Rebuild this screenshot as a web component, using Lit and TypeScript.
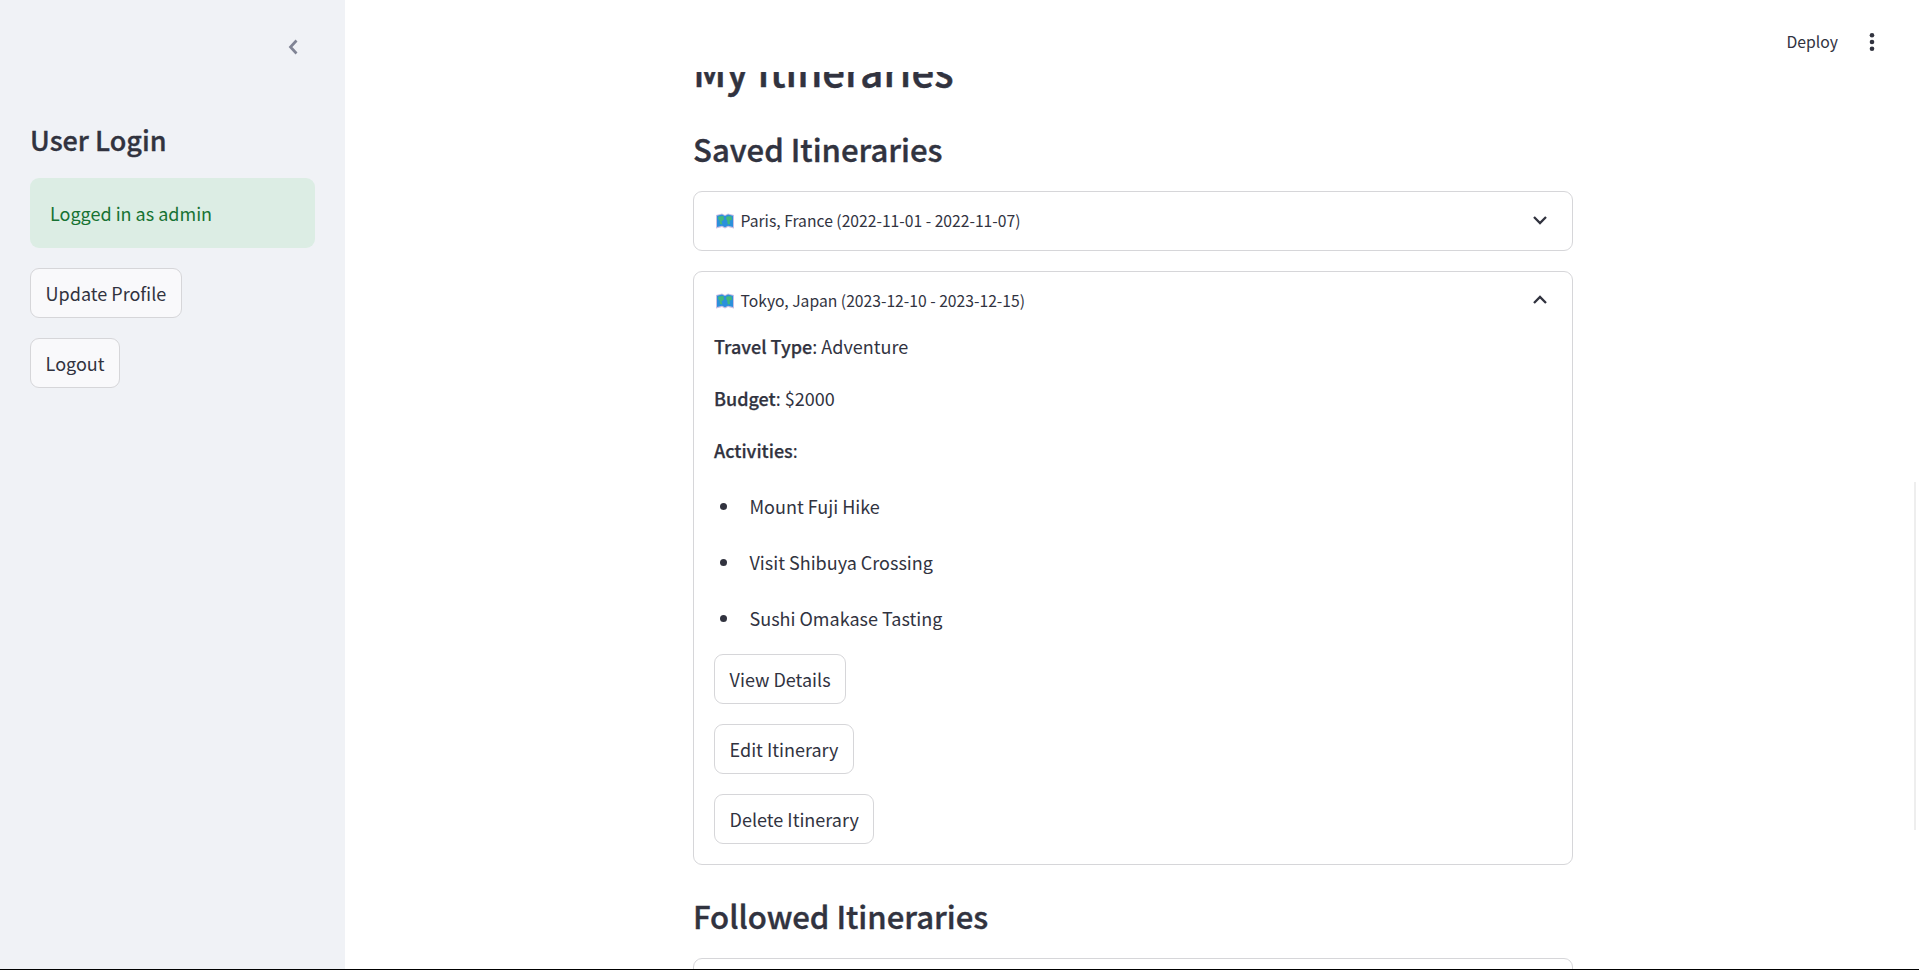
import { LitElement, html, css } from "lit";
import { customElement } from "lit/decorators.js";

const mapIcon = html`<svg class="map" viewBox="0 0 18 16" aria-hidden="true">
  <path d="M0 2 L6 0.5 L9 2 L12 0.5 L18 2 L18 15.5 L12 14 L9 15.5 L6 14 L0 15.5Z" fill="#c9bfe2"/>
  <path d="M1 2.8 L6 1.6 L9 3 L12 1.6 L17 2.8 L17 14 L12 12.8 L9 14.2 L6 12.8 L1 14Z" fill="#2b90dc"/>
  <path d="M2.5 3.5 L7.5 3 L8 6.5 L5.5 8.5 L6.5 11.5 L4 11 L3.6 7.5 L2 5.5Z" fill="#42b97c"/>
  <path d="M10.5 3.5 L15.5 3.2 L16 7 L13.5 7.5 L14.2 11 L11.8 11.5 L11.2 7.5 L10 5.5Z" fill="#42b97c"/>
</svg>`;

const chevronDown = html`<svg class="chev" viewBox="0 0 24 24" aria-hidden="true"><path d="M6 8 L12 14 L18 8" fill="none" stroke="currentColor" stroke-width="2.3"/></svg>`;
const chevronUp = html`<svg class="chev" viewBox="0 0 24 24" aria-hidden="true"><path d="M6 14 L12 8 L18 14" fill="none" stroke="currentColor" stroke-width="2.3"/></svg>`;

@customElement("app-root")
export class AppRoot extends LitElement {
  static styles = css`
    :host {
      display: block;
      height: 970px;
      overflow: hidden;
      font-family: "Noto Sans CJK SC", "Noto Sans", sans-serif;
      font-size: 18px;
      color: #31333f;
      background: #fff;
    }
    .frame { display: flex; flex-direction: column; height: 970px; }
    .app { flex: 1; min-height: 0; display: flex; position: relative; overflow: hidden; }
    .edge { flex: 0 0 1.5px; background: #000; }

    .sidebar {
      flex: 0 0 345px;
      box-sizing: border-box;
      background: #f0f2f6;
      padding: 0 30px;
      display: flex;
      flex-direction: column;
    }
    .collapse {
      height: 121px;
      display: flex;
      justify-content: flex-end;
      padding-top: 35px;
      box-sizing: border-box;
      color: #808495;
    }
    .collapse svg { width: 24px; height: 24px; margin-right: 10px; }
    .sb-title {
      margin: 0 0 19px;
      font-size: 27px;
      line-height: 38px;
      font-weight: 500;
      -webkit-text-stroke: 0.35px currentColor;
    }
    .alert {
      height: 70px;
      box-sizing: border-box;
      background: #dcede4;
      color: #177233;
      border-radius: 9px;
      padding: 0 20px;
      display: flex;
      align-items: center;
      margin-bottom: 20px;
    }

    .btn {
      display: flex;
      align-items: center;
      width: fit-content;
      height: 50px;
      box-sizing: border-box;
      padding: 0 14.6px;
      border: 1px solid #d6d6d9;
      border-radius: 9px;
      background: #fff;
      margin-bottom: 20px;
      line-height: 1;
      white-space: nowrap;
    }
    .sidebar .btn { background: #f9f9fb; }

    .main {
      flex: 1;
      min-width: 0;
      position: relative;
      overflow: hidden;
      display: flex;
      justify-content: center;
    }
    .header {
      position: absolute;
      inset: 0 0 auto 0;
      height: 72px;
      background: #fff;
      display: flex;
      align-items: center;
      justify-content: flex-end;
      padding: 11px 35px 0 0;
      gap: 22px;
      font-size: 15.75px;
      box-sizing: border-box;
    }
    .dots { width: 24px; height: 24px; color: #31333f; }
    .scrollbar {
      position: absolute;
      right: 3px;
      top: 482px;
      width: 2px;
      height: 348px;
      background: #eeeeee;
    }
    .content {
      width: 880px;
      margin-left: 2px;
      margin-top: 43px;
      display: flex;
      flex-direction: column;
      flex: none;
    }
    h1 {
      margin: 0 0 21px;
      font-size: 40.2px;
      line-height: 54px;
      font-weight: 500;
      -webkit-text-stroke: 0.45px currentColor;
    }
    h2 {
      margin: 6.5px 0 18.5px;
      font-size: 31.1px;
      line-height: 48px;
      font-weight: 500;
      -webkit-text-stroke: 0.4px currentColor;
    }
    .exp {
      border: 1px solid #d6d6d9;
      border-radius: 9px;
      margin-bottom: 20px;
      box-sizing: border-box;
    }
    .exp-head {
      height: 58px;
      display: flex;
      align-items: center;
      justify-content: space-between;
      padding: 0 20px 0 22px;
      font-size: 15.7px;
    }
    .exp-label { display: flex; align-items: center; gap: 6.5px; padding-bottom: 1px; }
    .map { width: 18px; height: 16px; display: block; }
    .chev { width: 24px; height: 24px; display: block; color: #31333f; }
    .exp-body { padding: 2px 20px 0; }
    .exp-body p { margin: 0 0 24px; line-height: 28px; }
    .exp-body b { font-weight: 500; -webkit-text-stroke: 0.25px currentColor; }
    ul { margin: 0; padding: 4px 0 0 6px; list-style: none; }
    li { line-height: 28px; margin-bottom: 28px; display: flex; align-items: center; gap: 22.5px; }
    li::before { content: ""; width: 7px; height: 7px; border-radius: 50%; background: #31333f; flex: none; }
    li:last-child { margin-bottom: 22px; }
    .placeholder { height: 58px; }
  `;

  render() {
    return html`<div class="frame">
      <div class="app">
        <aside class="sidebar">
          <div class="collapse">
            <svg viewBox="0 0 24 24" aria-hidden="true"><path d="M15.5 5.5 L9.5 12 L15.5 18.5" fill="none" stroke="currentColor" stroke-width="2.7"/></svg>
          </div>
          <h2 class="sb-title">User Login</h2>
          <div class="alert">Logged in as admin</div>
          <div class="btn">Update Profile</div>
          <div class="btn">Logout</div>
        </aside>
        <main class="main">
          <div class="content">
            <h1>My Itineraries</h1>
            <h2>Saved Itineraries</h2>
            <section class="exp">
              <div class="exp-head">
                <span class="exp-label">${mapIcon}Paris, France (2022-11-01 - 2022-11-07)</span>
                ${chevronDown}
              </div>
            </section>
            <section class="exp">
              <div class="exp-head">
                <span class="exp-label">${mapIcon}Tokyo, Japan (2023-12-10 - 2023-12-15)</span>
                ${chevronUp}
              </div>
              <div class="exp-body">
                <p><b>Travel Type</b>: Adventure</p>
                <p><b>Budget</b>: $2000</p>
                <p><b>Activities</b>:</p>
                <ul>
                  <li>Mount Fuji Hike</li>
                  <li>Visit Shibuya Crossing</li>
                  <li>Sushi Omakase Tasting</li>
                </ul>
                <div class="btn">View Details</div>
                <div class="btn">Edit Itinerary</div>
                <div class="btn">Delete Itinerary</div>
              </div>
            </section>
            <h2>Followed Itineraries</h2>
            <section class="exp"><div class="placeholder"></div></section>
          </div>
          <div class="header">
            <span>Deploy</span>
            <svg class="dots" viewBox="0 0 24 24" aria-hidden="true"><circle cx="12" cy="5.3" r="2.3" fill="currentColor"/><circle cx="12" cy="12" r="2.3" fill="currentColor"/><circle cx="12" cy="18.7" r="2.3" fill="currentColor"/></svg>
          </div>
          <div class="scrollbar"></div>
        </main>
      </div>
      <div class="edge"></div>
    </div>`;
  }
}
